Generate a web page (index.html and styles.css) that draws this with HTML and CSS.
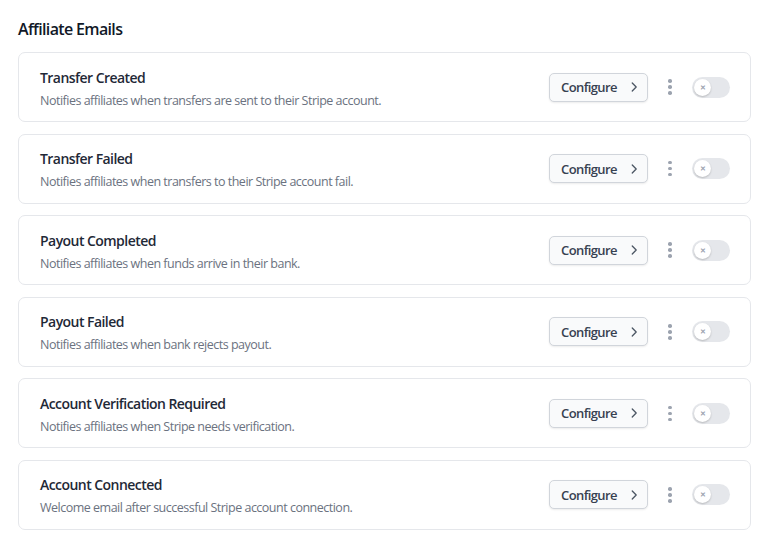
FILE: index.html
```html
<!DOCTYPE html>
<html lang="en">
<head>
<meta charset="utf-8">
<link rel="stylesheet" href="styles.css">
</head>
<body>
<main class="page">
  <h2 class="heading">Affiliate Emails</h2>
  <div class="list">
    <div class="card">
      <div class="info"><div class="title">Transfer Created</div><div class="desc">Notifies affiliates when transfers are sent to their Stripe account.</div></div>
      <div class="actions">
        <button class="btn">Configure <svg width="14" height="14" viewBox="0 0 16 16"><path d="M6 3.5 10.5 8 6 12.5" fill="none" stroke="#4b5563" stroke-width="1.5" stroke-linecap="round" stroke-linejoin="round"/></svg></button>
        <span class="kebab"><i></i><i></i><i></i></span>
        <span class="toggle"><span class="knob">&#x2715;</span></span>
      </div>
    </div>
    <div class="card">
      <div class="info"><div class="title">Transfer Failed</div><div class="desc">Notifies affiliates when transfers to their Stripe account fail.</div></div>
      <div class="actions">
        <button class="btn">Configure <svg width="14" height="14" viewBox="0 0 16 16"><path d="M6 3.5 10.5 8 6 12.5" fill="none" stroke="#4b5563" stroke-width="1.5" stroke-linecap="round" stroke-linejoin="round"/></svg></button>
        <span class="kebab"><i></i><i></i><i></i></span>
        <span class="toggle"><span class="knob">&#x2715;</span></span>
      </div>
    </div>
    <div class="card">
      <div class="info"><div class="title">Payout Completed</div><div class="desc">Notifies affiliates when funds arrive in their bank.</div></div>
      <div class="actions">
        <button class="btn">Configure <svg width="14" height="14" viewBox="0 0 16 16"><path d="M6 3.5 10.5 8 6 12.5" fill="none" stroke="#4b5563" stroke-width="1.5" stroke-linecap="round" stroke-linejoin="round"/></svg></button>
        <span class="kebab"><i></i><i></i><i></i></span>
        <span class="toggle"><span class="knob">&#x2715;</span></span>
      </div>
    </div>
    <div class="card">
      <div class="info"><div class="title">Payout Failed</div><div class="desc">Notifies affiliates when bank rejects payout.</div></div>
      <div class="actions">
        <button class="btn">Configure <svg width="14" height="14" viewBox="0 0 16 16"><path d="M6 3.5 10.5 8 6 12.5" fill="none" stroke="#4b5563" stroke-width="1.5" stroke-linecap="round" stroke-linejoin="round"/></svg></button>
        <span class="kebab"><i></i><i></i><i></i></span>
        <span class="toggle"><span class="knob">&#x2715;</span></span>
      </div>
    </div>
    <div class="card">
      <div class="info"><div class="title">Account Verification Required</div><div class="desc">Notifies affiliates when Stripe needs verification.</div></div>
      <div class="actions">
        <button class="btn">Configure <svg width="14" height="14" viewBox="0 0 16 16"><path d="M6 3.5 10.5 8 6 12.5" fill="none" stroke="#4b5563" stroke-width="1.5" stroke-linecap="round" stroke-linejoin="round"/></svg></button>
        <span class="kebab"><i></i><i></i><i></i></span>
        <span class="toggle"><span class="knob">&#x2715;</span></span>
      </div>
    </div>
    <div class="card">
      <div class="info"><div class="title">Account Connected</div><div class="desc">Welcome email after successful Stripe account connection.</div></div>
      <div class="actions">
        <button class="btn">Configure <svg width="14" height="14" viewBox="0 0 16 16"><path d="M6 3.5 10.5 8 6 12.5" fill="none" stroke="#4b5563" stroke-width="1.5" stroke-linecap="round" stroke-linejoin="round"/></svg></button>
        <span class="kebab"><i></i><i></i><i></i></span>
        <span class="toggle"><span class="knob">&#x2715;</span></span>
      </div>
    </div>
  </div>
</main>
</body>
</html>
```
FILE: styles.css
```css
* { box-sizing: border-box; }
html, body { margin: 0; background: #fff; }
body { font-family: "Open Sans", "Noto Sans", sans-serif; color: #111827; }
.page { padding: 17px 16px 0 18px; }
.heading { margin: 0 0 11px; font-size: 16px; font-weight: 600; line-height: 24px; color: #111827; letter-spacing: -0.65px; }
.list { display: flex; flex-direction: column; gap: 11.6px; }
.card {
  display: flex; align-items: center; justify-content: space-between;
  border: 1px solid #e5e7eb; border-radius: 7px; background: #fff;
  height: 70px; padding: 0 20px 0 21px;
}
.info { display: flex; flex-direction: column; gap: 4px; padding-top: 3px; }
.title { font-size: 14px; font-weight: 600; line-height: 20px; color: #1f2937; letter-spacing: -0.55px; }
.desc { font-size: 12.5px; line-height: 18px; color: #6b7280; letter-spacing: -0.5px; }
.actions { display: flex; align-items: center; }
.btn {
  display: inline-flex; align-items: center; gap: 10px;
  height: 29px; width: 99px; padding: 0 0 0 11px;
  font-family: inherit; font-size: 13px; font-weight: 600; color: #374151; letter-spacing: -0.6px;
  background: #f9fafb; border: 1px solid #d1d5db; border-radius: 5px;
  box-shadow: 0 1px 2px rgba(0,0,0,0.08);
}
.kebab { display: flex; flex-direction: column; gap: 2.5px; margin: 0 20px 0 20px; width: 4px; align-items: center; }
.kebab i { width: 3.5px; height: 3.5px; border-radius: 50%; background: #9ca3af; display: block; }
.toggle { display: flex; align-items: center; width: 38px; height: 21px; border-radius: 11px; background: #e5e7eb; padding: 2px; }
.knob {
  width: 17px; height: 17px; border-radius: 50%; background: #fff;
  box-shadow: 0 1px 2px rgba(0,0,0,0.2);
  display: flex; align-items: center; justify-content: center;
  font-size: 7px; font-weight: 700; color: #9ca3af; line-height: 1;
}
```
